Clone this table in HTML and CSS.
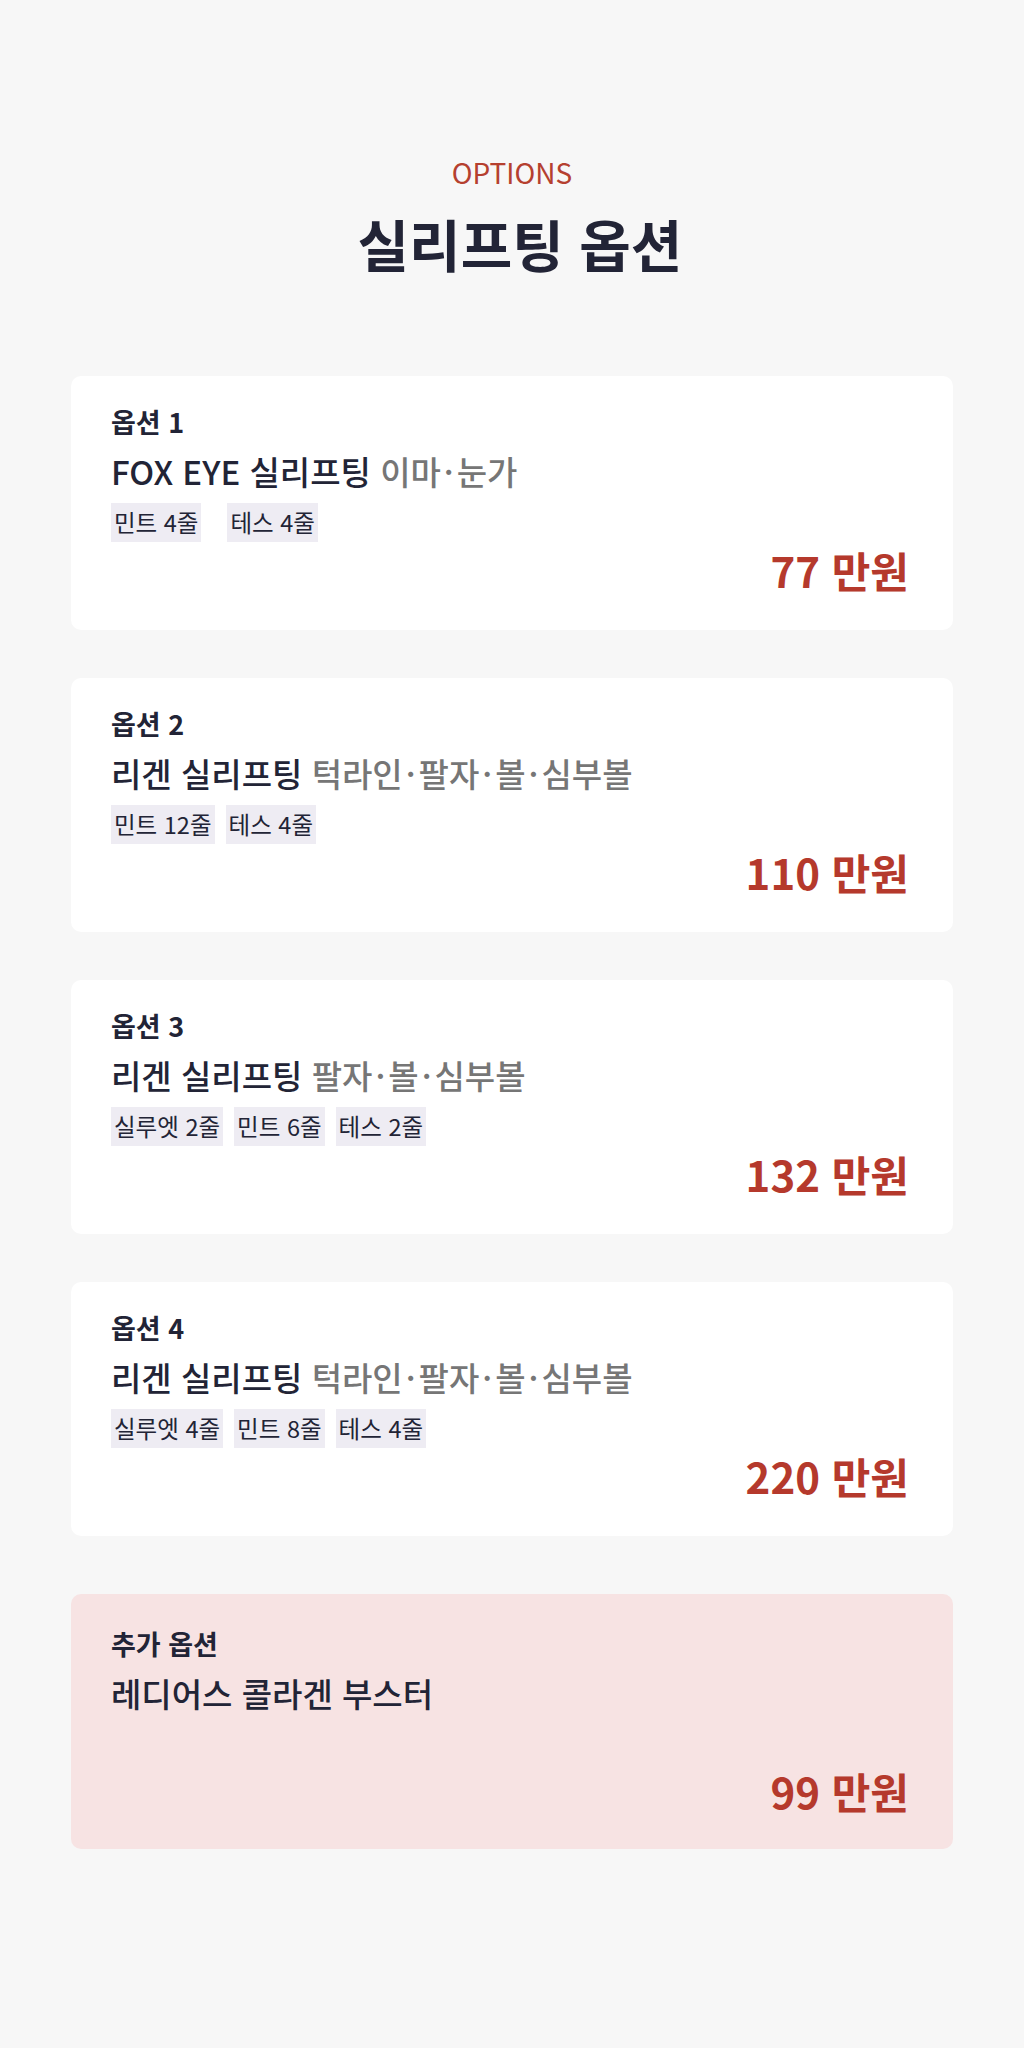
FILE: index.html
```html
<!DOCTYPE html>
<html lang="ko">
<head>
  <meta charset="UTF-8">
  <title>실리프팅 옵션</title>
  <link rel="stylesheet" href="styles.css">
</head>
<body>
  <div class="container">
    <header class="heading">
      <p class="eyebrow">OPTIONS</p>
      <h1>실리프팅 옵션</h1>
    </header>

    <div class="option-list">
      <div class="option-card">
        <div class="option-label">옵션 1</div>
        <div class="option-name">FOX EYE 실리프팅 <span class="area">이마<span class="dot">·</span>눈가</span></div>
        <div class="tags tags-wide">
          <span class="tag">민트 4줄</span>
          <span class="tag">테스 4줄</span>
        </div>
        <div class="price">77 만원</div>
      </div>

      <div class="option-card">
        <div class="option-label">옵션 2</div>
        <div class="option-name">리겐 실리프팅 <span class="area">턱라인<span class="dot">·</span>팔자<span class="dot">·</span>볼<span class="dot">·</span>심부볼</span></div>
        <div class="tags">
          <span class="tag">민트 12줄</span>
          <span class="tag">테스 4줄</span>
        </div>
        <div class="price">110 만원</div>
      </div>

      <div class="option-card">
        <div class="option-label">옵션 3</div>
        <div class="option-name">리겐 실리프팅 <span class="area">팔자<span class="dot">·</span>볼<span class="dot">·</span>심부볼</span></div>
        <div class="tags">
          <span class="tag">실루엣 2줄</span>
          <span class="tag">민트 6줄</span>
          <span class="tag">테스 2줄</span>
        </div>
        <div class="price">132 만원</div>
      </div>

      <div class="option-card">
        <div class="option-label">옵션 4</div>
        <div class="option-name">리겐 실리프팅 <span class="area">턱라인<span class="dot">·</span>팔자<span class="dot">·</span>볼<span class="dot">·</span>심부볼</span></div>
        <div class="tags">
          <span class="tag">실루엣 4줄</span>
          <span class="tag">민트 8줄</span>
          <span class="tag">테스 4줄</span>
        </div>
        <div class="price">220 만원</div>
      </div>

      <!-- 추가 옵션 -->
      <div class="option-card extra">
        <div class="option-label">추가 옵션</div>
        <div class="option-name">레디어스 콜라겐 부스터</div>
        <div class="price">99 만원</div>
      </div>
    </div>
  </div>
</body>
</html>
```

FILE: styles.css
```css
body {
  margin: 0;
  background-color: #f7f7f7;
  font-family: "Noto Sans CJK KR", "Noto Sans", sans-serif;
  color: #222436;
}

.container {
  max-width: 882px;
  margin: 0 auto;
  padding: 152px 0 190px;
}

.heading {
  text-align: center;
  margin-bottom: 97px;
}

.eyebrow {
  margin: 0;
  font-size: 28px;
  font-weight: 400;
  line-height: 40px;
  color: #b5402f;
}

h1 {
  margin: 15px 0 0;
  padding-left: 16px;
  font-size: 56px;
  font-weight: 700;
  line-height: 72px;
  color: #222436;
}

.option-list {
  display: flex;
  flex-direction: column;
  gap: 48px;
}

.option-card {
  display: flex;
  flex-direction: column;
  min-height: 254px;
  box-sizing: border-box;
  padding: 28px 44px 35px 40px;
  background-color: #fff;
  border-radius: 10px;
}

.option-card.extra {
  min-height: 255px;
  margin-top: 10px;
  padding-top: 32px;
  padding-bottom: 33px;
  background-color: #f7e3e3;
}

.option-label {
  font-size: 27px;
  font-weight: 700;
  line-height: 36px;
}

.option-name {
  margin-top: 9px;
  font-size: 33px;
  font-weight: 500;
  line-height: 44px;
}

.area {
  color: #767676;
}

.dot {
  margin: 0 3px;
}

.tags {
  display: flex;
  gap: 11px;
  margin-top: 10px;
}

.tags-wide {
  gap: 26px;
}

.tag {
  padding: 0 3px;
  font-size: 23.5px;
  line-height: 39px;
  background-color: #eeecf3;
}

.price {
  margin-top: auto;
  text-align: right;
  font-size: 42px;
  font-weight: 700;
  line-height: 50px;
  color: #b5392c;
}
```
